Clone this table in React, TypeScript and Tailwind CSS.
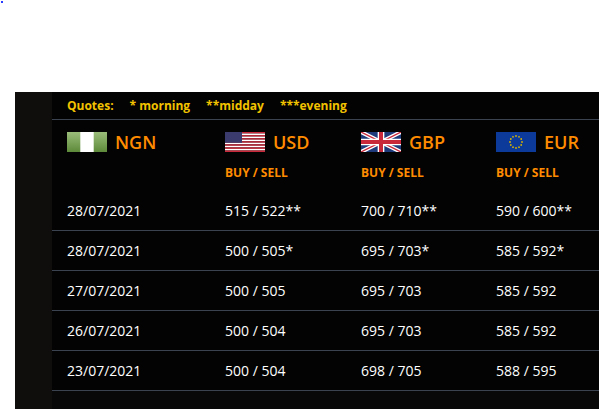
import React from "react";

const rows = [
  { date: "28/07/2021", usd: "515 / 522**", gbp: "700 / 710**", eur: "590 / 600**" },
  { date: "28/07/2021", usd: "500 / 505*", gbp: "695 / 703*", eur: "585 / 592*" },
  { date: "27/07/2021", usd: "500 / 505", gbp: "695 / 703", eur: "585 / 592" },
  { date: "26/07/2021", usd: "500 / 504", gbp: "695 / 703", eur: "585 / 592" },
  { date: "23/07/2021", usd: "500 / 504", gbp: "698 / 705", eur: "588 / 595" },
];

function FlagNG() {
  return (
    <svg width="40" height="20" viewBox="0 0 40 20">
      <defs>
        <linearGradient id="ng" x1="0" y1="0" x2="0" y2="1">
          <stop offset="0" stopColor="#9bbd7a" />
          <stop offset="1" stopColor="#5d8a3a" />
        </linearGradient>
      </defs>
      <rect width="40" height="20" fill="url(#ng)" />
      <rect x="13.3" width="13.4" height="20" fill="#fff" />
    </svg>
  );
}

function FlagUS() {
  const stripes = [];
  for (let i = 0; i < 13; i++) {
    stripes.push(
      <rect key={i} x="0" y={(i * 20) / 13} width="40" height={20 / 13} fill={i % 2 === 0 ? "#c8283a" : "#fff"} />
    );
  }
  return (
    <svg width="40" height="20" viewBox="0 0 40 20">
      {stripes}
      <rect width="17" height="10.8" fill="#3c3b6e" />
    </svg>
  );
}

function FlagGB() {
  return (
    <svg width="40" height="20" viewBox="0 0 60 30">
      <rect width="60" height="30" fill="#1f3a7a" />
      <path d="M0,0 L60,30 M60,0 L0,30" stroke="#fff" strokeWidth="6" />
      <path d="M0,0 L60,30 M60,0 L0,30" stroke="#c8283a" strokeWidth="2" />
      <path d="M30,0 V30 M0,15 H60" stroke="#fff" strokeWidth="10" />
      <path d="M30,0 V30 M0,15 H60" stroke="#c8283a" strokeWidth="6" />
    </svg>
  );
}

function FlagEU() {
  const stars = [];
  for (let i = 0; i < 12; i++) {
    const a = (i * Math.PI) / 6;
    stars.push(<circle key={i} cx={20 + 6 * Math.cos(a)} cy={10 + 6 * Math.sin(a)} r="0.9" fill="#d8b400" />);
  }
  return (
    <svg width="40" height="20" viewBox="0 0 40 20">
      <rect width="40" height="20" fill="#0b3a9a" />
      {stars}
    </svg>
  );
}

function Currency({ flag, code, buySell }: { flag: React.ReactNode; code: string; buySell?: boolean }) {
  return (
    <div className="flex flex-col">
      <div className="flex items-center h-[20px] gap-[8px]">
        {flag}
        <span className="text-[18px] font-semibold text-[#ff8c00] leading-none">{code}</span>
      </div>
      {buySell && <div className="mt-[12px] text-[12px] font-bold text-[#ff8c00]">BUY / SELL</div>}
    </div>
  );
}

export default function App() {
  return (
    <div className="bg-white h-[409px] overflow-hidden" style={{ fontFamily: '"Open Sans", sans-serif' }}>
      <div className="h-[92px] pt-[1px] pl-[1px]">
        <div className="w-[2px] h-[2px] bg-[#2a3cff]" />
      </div>
      <div className="ml-[15px] flex h-[317px] bg-[#0f0e0c]">
        <div className="w-[37px] shrink-0" />
        <div className="flex-1 bg-[#080808] flex flex-col">
          <div className="h-[28px] border-b border-[#3c4350] bg-[#030303] flex items-center gap-4 pl-[15px] text-[12px] font-bold text-[#f2c200]">
            <span>Quotes:</span>
            <span>* morning</span>
            <span>**midday</span>
            <span>***evening</span>
          </div>
          <div className="bg-[#030303]">
            <div className="grid grid-cols-[158px_136px_135px_1fr] pl-[15px] pt-[12px] h-[71px]">
              <Currency flag={<FlagNG />} code="NGN" />
              <Currency flag={<FlagUS />} code="USD" buySell />
              <Currency flag={<FlagGB />} code="GBP" buySell />
              <Currency flag={<FlagEU />} code="EUR" buySell />
            </div>
            {rows.map((r, i) => (
              <div
                key={i}
                className="grid grid-cols-[158px_136px_135px_1fr] pl-[15px] h-[40px] items-center border-b border-[#3c4350] text-[14px] text-white"
              >
                <span>{r.date}</span>
                <span>{r.usd}</span>
                <span>{r.gbp}</span>
                <span>{r.eur}</span>
              </div>
            ))}
          </div>
        </div>
      </div>
    </div>
  );
}
